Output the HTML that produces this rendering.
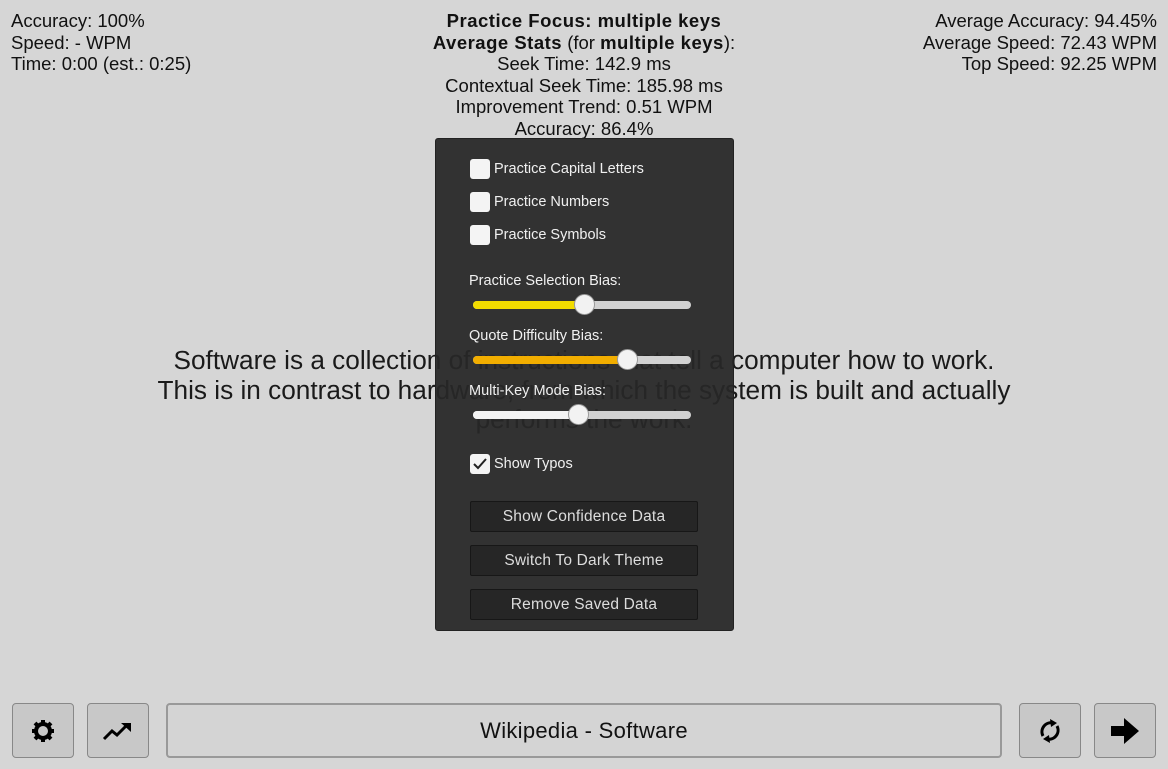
<!DOCTYPE html>
<html><head><meta charset="utf-8"><style>
*{margin:0;padding:0;box-sizing:border-box}
body{width:1168px;height:769px;background:#d6d6d6;font-family:"Liberation Sans",sans-serif;color:#111;position:relative;overflow:hidden}
.tl{position:absolute;left:11px;top:10px;font-size:18.5px;line-height:21.5px}
.tr{position:absolute;right:11px;top:10px;font-size:18.5px;line-height:21.5px;text-align:right}
.tc{position:absolute;left:0;width:1168px;top:10px;font-size:18.5px;line-height:21.5px;text-align:center}
.tc b{letter-spacing:.5px}
.panel{position:absolute;z-index:2;left:435px;top:138px;width:299px;height:493px;background:#323232;border:1px solid #222;border-radius:3px;color:#f0f0f0;font-size:14.5px;overflow:hidden}
.cb{position:absolute;left:34px;display:flex;align-items:center}
.cb i{width:20px;height:20px;background:#f4f4f4;border-radius:3px;margin-right:4px;display:inline-block;position:relative}
.lbl{position:absolute;left:33px}
.sl{position:absolute;left:37px;width:218px;height:8px;border-radius:4px;background:#d2d2d2}
.sl .f{position:absolute;left:0;top:0;height:8px;border-radius:4px}
.sl .k{position:absolute;top:-7px;width:21px;height:21px;border-radius:50%;background:#f2f2f2;border:1px solid #999}
.btn{position:absolute;left:34px;width:228px;height:31px;background:#262626;border:1px solid #171717;border-radius:2px;text-align:center;line-height:30px;color:#ddd;font-size:15.5px;letter-spacing:.2px}
.main{position:absolute;left:0;width:1168px;top:346px;text-align:center;font-size:26.2px;line-height:29.5px;color:#1a1a1a}
.main2{left:-436px;top:207px;color:#262626}
.b{position:absolute;top:703px;height:55px;background:#c8c8c8;border:1px solid #888;border-radius:4px;display:flex;align-items:center;justify-content:center}
</style></head><body>
<div class="tl">Accuracy: 100%<br>Speed: - WPM<br>Time: 0:00 (est.: 0:25)</div>
<div class="tc"><b>Practice Focus: multiple keys</b><br><b>Average Stats</b> (for <b>multiple keys</b>):<br>Seek Time: 142.9 ms<br>Contextual Seek Time: 185.98 ms<br>Improvement Trend: 0.51 WPM<br>Accuracy: 86.4%</div>
<div class="tr">Average Accuracy: 94.45%<br>Average Speed: 72.43 WPM<br>Top Speed: 92.25 WPM</div>
<div class="main">Software is a collection of instructions that tell a computer how to work.<br>This is in contrast to hardware, from which the system is built and actually<br>performs the work.</div>
<div class="panel">
<div class="main main2">Software is a collection of instructions that tell a computer how to work.<br>This is in contrast to hardware, from which the system is built and actually<br>performs the work.</div>
<div class="cb" style="top:20px"><i></i>Practice Capital Letters</div>
<div class="cb" style="top:53px"><i></i>Practice Numbers</div>
<div class="cb" style="top:86px"><i></i>Practice Symbols</div>
<div class="lbl" style="top:134px">Practice Selection Bias:</div>
<div class="sl" style="top:162px"><div class="f" style="width:112px;background:#f2dc00"></div><div class="k" style="left:101px"></div></div>
<div class="lbl" style="top:189px">Quote Difficulty Bias:</div>
<div class="sl" style="top:217px"><div class="f" style="width:155px;background:#f2ae00"></div><div class="k" style="left:144px"></div></div>
<div class="lbl" style="top:244px">Multi-Key Mode Bias:</div>
<div class="sl" style="top:272px"><div class="f" style="width:106px;background:#f4f4f4"></div><div class="k" style="left:95px"></div></div>
<div class="cb" style="top:315px"><i><svg width="20" height="20" viewBox="0 0 20 20"><path d="M4 10l4 4 8-9" stroke="#222" stroke-width="2" fill="none"/></svg></i>Show Typos</div>
<div class="btn" style="top:362px">Show Confidence Data</div>
<div class="btn" style="top:406px">Switch To Dark Theme</div>
<div class="btn" style="top:450px">Remove Saved Data</div>
</div>
<div class="b" style="left:12px;width:62px"><svg width="26" height="26" viewBox="0 0 26 26"><circle cx="13" cy="13" r="7" fill="none" stroke="#000" stroke-width="4"/><g stroke="#000" stroke-width="4"><path d="M13 2v4M13 20v4M2 13h4M20 13h4M5 5l3 3M18 18l3 3M5 21l3-3M18 8l3-3"/></g></svg></div>
<div class="b" style="left:87px;width:62px"><svg width="32" height="24" viewBox="0 0 32 24"><path d="M2 20l8-8 5 4 9-9" stroke="#000" stroke-width="3" fill="none"/><path d="M19 4h10v9z" fill="#000"/></svg></div>
<div class="b" style="left:166px;width:836px;background:#d4d4d4;border:2px solid #999;font-size:22px;letter-spacing:.3px">Wikipedia - Software</div>
<div class="b" style="left:1019px;width:62px"><svg width="26" height="30" viewBox="0 0 26 30"><path d="M6 20a9 9 0 0 1 10-13" stroke="#000" stroke-width="3" fill="none"/><path d="M13 3l7 4-6 4z" fill="#000"/><path d="M20 10a9 9 0 0 1-10 13" stroke="#000" stroke-width="3" fill="none"/><path d="M13 27l-7-4 6-4z" fill="#000"/></svg></div>
<div class="b" style="left:1094px;width:62px"><svg width="30" height="28" viewBox="0 0 30 28"><path d="M1 9h13V1l15 13-15 13v-8H1z" fill="#000"/></svg></div>
</body></html>
